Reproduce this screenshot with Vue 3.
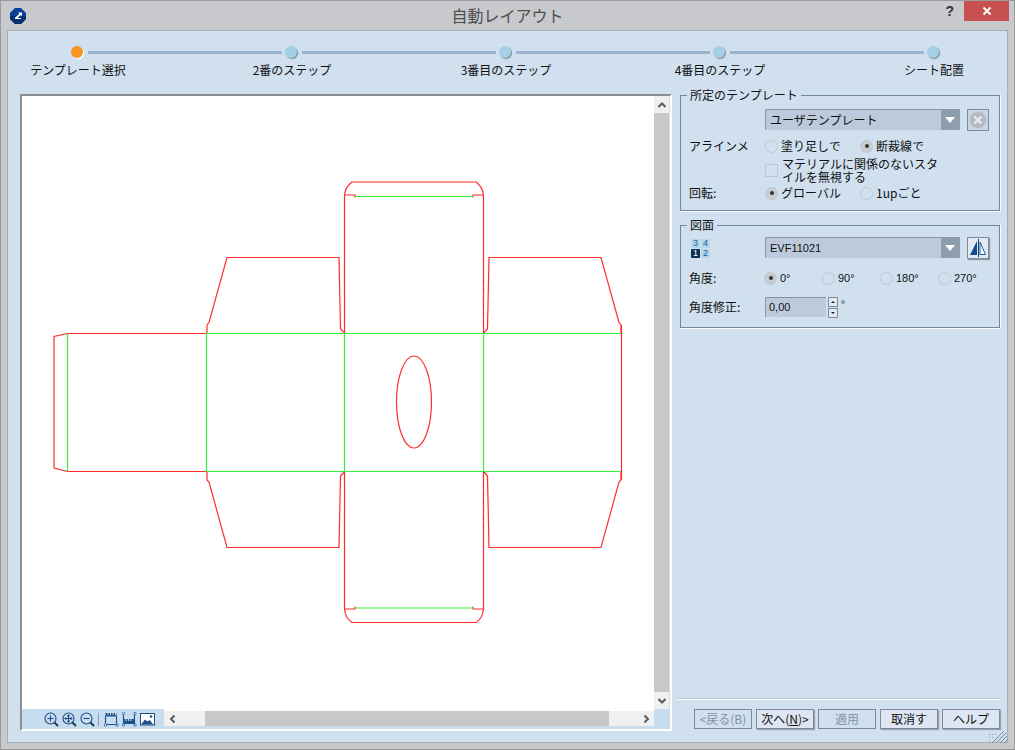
<template>
  <div class="window">
    <header class="titlebar">
      <svg class="app-icon" viewBox="0 0 16 16" width="16" height="16">
        <path d="M5 0h6l5 5v6l-5 5H5l-5-5V5z" fill="#0b3f93" />
        <path d="M0 8h16v3l-5 5H5l-5-5z" fill="#06306f" />
        <path d="M8 4.5h4v4l-1.3-1.5-3 3H11V11H5V9.8l4.3-4z" fill="#fff" />
      </svg>
      <h1 class="title">自動レイアウト</h1>
      <span class="help">?</span>
      <button class="close" aria-label="close">
        <svg viewBox="0 0 10 10" width="10" height="10"><path d="M1.5 1.5l7 7M8.5 1.5l-7 7" stroke="#fff" stroke-width="2" /></svg>
      </button>
    </header>

    <main class="panel">
      <section class="stepper">
        <div class="track">
          <template v-for="(s, i) in steps" :key="s">
            <span class="dot" :class="{ active: i === 0 }"></span>
            <span v-if="i < steps.length - 1" class="connector"></span>
          </template>
        </div>
        <div class="labels">
          <span v-for="s in steps" :key="s" class="step-label">{{ s }}</span>
        </div>
      </section>

      <section class="body">
        <div class="viewer">
          <div class="viewer-top">
            <div class="canvas">
              <svg class="dieline" viewBox="22 96 632 613" width="632" height="613">
                <g fill="none" stroke="#ff2b2b" stroke-width="1.2">
                  <path d="M67.5 333.5L54 336.5V468L67.5 471.5" />
                  <path d="M67.5 333.5H207" />
                  <path d="M67.5 471.5H207" />
                  <path d="M207 333V325L209 322.5L227 257.5H339L340.5 329L345 333" />
                  <path d="M621 333V325L619 322.5L601 257.5H489L487.5 329L483.500 333" />
                  <path d="M207 471.5V480L209 482L227 547.5H339L340.5 476L345 471.5" />
                  <path d="M621 471.5V480L619 482L601 547.5H489L487.5 476L483.5 471.5" />
                  <path d="M621.5 325V480" />
                  <path d="M344.5 333V195C345 189 348 185 352 182H476C480 185 483 189 483.5 195V333" />
                  <path d="M344.5 471.5V609C345 615 348 620 352 622.5H476C480 620 483 615 483.5 609V471.5" />
                  <path d="M345 195H355V197.5" />
                  <path d="M483 195H473V197.5" />
                  <path d="M345 609H355V606.5" />
                  <path d="M483 609H473V606.5" />
                  <ellipse cx="414" cy="402" rx="17.5" ry="46" />
                </g>
                <g fill="none" stroke="#35ee35" stroke-width="1.2">
                  <path d="M67.5 334V471" />
                  <path d="M207 333.5H621" />
                  <path d="M207 471.5H621" />
                  <path d="M206.5 333V472" />
                  <path d="M344.5 333V472" />
                  <path d="M483.5 333V472" />
                  <path d="M355 196.5H473" />
                  <path d="M355 608H473" />
                </g>
              </svg>
            </div>
            <div class="vscroll">
              <span class="sb-btn"><svg viewBox="0 0 10 10" width="10" height="10"><path d="M1.5 7L5 3.5 8.5 7" class="chev" /></svg></span>
              <span class="vthumb"></span>
              <span class="sb-btn"><svg viewBox="0 0 10 10" width="10" height="10"><path d="M1.5 3L5 6.5 8.5 3" class="chev" /></svg></span>
            </div>
          </div>
          <div class="viewer-bottom">
            <div class="tools">
              <svg class="tool" viewBox="0 0 15 15" width="15" height="15"><circle cx="6.5" cy="6.5" r="5.5" class="t" /><path d="M3.5 6.5h6M6.5 3.5v6" class="t" /><path d="M10.5 10.5l3.5 3.5" class="t thick" /></svg>
              <svg class="tool" viewBox="0 0 15 15" width="15" height="15"><circle cx="6.5" cy="6.5" r="5.5" class="t" /><path d="M3 6.5h7M6.5 3v7M5.3 4.2l1.2-1.2 1.2 1.2M5.3 8.8l1.2 1.2 1.2-1.2M4.2 5.3L3 6.5l1.2 1.2M8.8 5.3L10 6.5 8.8 7.7" class="t" /><path d="M10.5 10.5l3.5 3.5" class="t thick" /></svg>
              <svg class="tool" viewBox="0 0 15 15" width="15" height="15"><circle cx="6.5" cy="6.5" r="5.5" class="t" /><path d="M3.5 6.5h6" class="t" /><path d="M10.5 10.5l3.5 3.5" class="t thick" /></svg>
              <span class="tool-sep"></span>
              <svg class="tool" viewBox="0 0 15 15" width="15" height="15"><path d="M1.5 4.5V1h11v3.5h-11z" fill="#1d5289" /><path d="M4 1v2M6.5 1v2M9 1v2M11.5 1v2" stroke="#d0e0ef" stroke-width="1" /><path d="M1.5 4v8.5h11V4" class="t" /><circle cx="1.5" cy="13" r="1.2" fill="#fff" stroke="#2a6fc0" /><circle cx="13" cy="13" r="1.2" fill="#fff" stroke="#2a6fc0" /></svg>
              <svg class="tool" viewBox="0 0 15 15" width="15" height="15"><path d="M1.5 1.5v12M12.5 1.5v12" class="t" /><path d="M2 7h10v5H2z" fill="#1d5289" /><path d="M4 7v2M6.5 7v2M9 7v2" stroke="#d0e0ef" /><g fill="#fff" stroke="#2a6fc0"><circle cx="1.5" cy="1.5" r="1.2" /><circle cx="13" cy="1.5" r="1.2" /><circle cx="1.5" cy="13" r="1.2" /><circle cx="13" cy="13" r="1.2" /></g></svg>
              <svg class="tool" viewBox="0 0 15 15" width="15" height="15"><rect x="0.5" y="1.5" width="14" height="11.5" fill="#fff" stroke="#1d4f85" /><path d="M1 12.5l4-5 2.500 2 2-1.500 4 4.500z" fill="#1d5289" /><circle cx="11" cy="4.5" r="1.3" fill="#1d5289" /></svg>
            </div>
            <div class="hscroll">
              <span class="sb-btn"><svg viewBox="0 0 10 10" width="10" height="10"><path d="M6.5 1.5L3 5l3.5 3.5" class="chev" /></svg></span>
              <span class="htrack start"></span>
              <span class="hthumb"></span>
              <span class="htrack end"></span>
              <span class="sb-btn"><svg viewBox="0 0 10 10" width="10" height="10"><path d="M3.5 1.5L7 5 3.5 8.5" class="chev" /></svg></span>
            </div>
            <div class="corner"></div>
          </div>
        </div>

        <aside class="side">
          <div class="group first">
            <span class="legend">所定のテンプレート</span>
            <div class="row combo-row">
              <span class="key"></span>
              <div class="combo"><span>ユーザテンプレート</span><i class="arrow"></i></div>
              <button class="square disabled" aria-label="clear">
                <svg viewBox="0 0 18 18" width="18" height="18"><circle cx="9" cy="9" r="8.5" fill="#b5bcc5" /><path d="M5.5 5.5l7 7M12.5 5.5l-7 7" stroke="#e8ebef" stroke-width="2.2" /></svg>
              </button>
            </div>
            <div class="row opts">
              <span class="key">アラインメ</span>
              <label class="opt wide"><i class="radio"></i>塗り足しで</label>
              <label class="opt"><i class="radio on"></i>断裁線で</label>
            </div>
            <div class="row check">
              <span class="key"></span>
              <i class="checkbox"></i>
              <span class="check-text">マテリアルに関係のないスタイルを無視する</span>
            </div>
            <div class="row opts tight">
              <span class="key">回転:</span>
              <label class="opt wide"><i class="radio on"></i>グローバル</label>
              <label class="opt"><i class="radio"></i>1upごと</label>
            </div>
          </div>

          <div class="group second">
            <span class="legend">図面</span>
            <div class="row combo-row">
              <span class="key">
                <span class="pages">
                  <b>3</b><b>4</b><b class="cur">1</b><b>2</b>
                </span>
              </span>
              <div class="combo"><span class="latin">EVF11021</span><i class="arrow"></i></div>
              <button class="square" aria-label="mirror">
                <svg viewBox="0 0 20 20" width="20" height="20"><path d="M9 3v14H2z" fill="#124b8a" /><path d="M10.5 1v18" stroke="#123f73" stroke-width="1" /><path d="M12 4l5.500 12.500H12z" fill="#fff" stroke="#1c5a9a" /></svg>
              </button>
            </div>
            <div class="row angles">
              <span class="key">角度:</span>
              <label v-for="(a, i) in angles" :key="a" class="opt angle latin"><i class="radio" :class="{ on: i === 0 }"></i>{{ a }}</label>
            </div>
            <div class="row spin-row">
              <span class="key">角度修正:</span>
              <div class="spin-input latin">0,00</div>
              <div class="spin">
                <span><svg viewBox="0 0 6 4" width="6" height="4"><path d="M3 1l2 2H1z" fill="#222" /></svg></span>
                <span><svg viewBox="0 0 6 4" width="6" height="4"><path d="M3 3L1 1h4z" fill="#222" /></svg></span>
              </div>
              <span class="deg">°</span>
            </div>
          </div>

          <div class="foot">
            <hr class="rule" />
            <div class="buttons">
              <button class="btn off">&lt;戻る(B)</button>
              <button class="btn default">次へ(<u>N</u>)&gt;</button>
              <button class="btn off">適用</button>
              <button class="btn">取消す</button>
              <button class="btn">ヘルプ</button>
            </div>
          </div>
        </aside>
      </section>
    </main>

    <svg class="grip" viewBox="0 0 18 12" width="18" height="12">
      <path d="M15 0L3 12M17 2L7 12M18 5L11 12M18 9L15 12" stroke="#7d8794" stroke-width="1" />
      <g fill="#8a94a0"><rect x="0" y="3" width="1" height="1" /><rect x="3" y="3" width="1" height="1" /><rect x="6" y="3" width="1" height="1" /><rect x="0" y="6" width="1" height="1" /><rect x="3" y="6" width="1" height="1" /><rect x="0" y="9" width="1" height="1" /></g>
    </svg>
  </div>
</template>

<script setup>
const steps = ['テンプレート選択', '2番のステップ', '3番目のステップ', '4番目のステップ', 'シート配置']
const angles = ['0°', '90°', '180°', '270°']
</script>

<style>
html, body { margin: 0; background: #fff; }
</style>

<style scoped>
.window {
  position: relative;
  box-sizing: border-box;
  width: 1015px;
  height: 750px;
  display: flex;
  flex-direction: column;
  background: #c8c9cc;
  border: 1px solid #9b9b9b;
  padding: 0 6px 6px;
  font-family: "Noto Sans CJK JP", "Noto Sans", sans-serif;
  font-size: 12px;
  line-height: 16px;
  color: #111;
}
.titlebar {
  position: relative;
  flex: none;
  height: 29px;
  display: flex;
  align-items: flex-start;
}
.app-icon { margin: 7px 0 0 3px; flex: none; }
.title {
  position: absolute;
  left: 0;
  right: 0;
  top: 3px;
  margin: 0;
  text-align: center;
  font-size: 16px;
  line-height: 22px;
  font-weight: 400;
  color: #4d4d4d;
}
.help {
  margin-left: auto;
  margin-top: 2px;
  margin-right: 10px;
  font: 700 14px/16px "Liberation Sans", sans-serif;
  color: #333;
}
.close {
  width: 45px;
  height: 20px;
  margin: 0 -1px 0 0;
  padding: 0;
  border: 0;
  background: #c75050;
  display: flex;
  align-items: center;
  justify-content: center;
}
.panel {
  flex: 1;
  min-height: 0;
  background: #d0e0ef;
  border: 1px solid #a4adb8;
  padding: 0 7px 0 12px;
  display: flex;
  flex-direction: column;
}
.stepper { margin: 15px -7px 0 -12px; flex: none; }
.track {
  display: flex;
  align-items: center;
  padding-left: 63px;
  height: 12px;
}
.dot {
  flex: none;
  width: 12px;
  height: 12px;
  border-radius: 50%;
  background: #a4d0e6;
  box-shadow: 1px 1px 1px #7b8a99;
}
.dot.active {
  background: #f7931e;
  box-shadow: 1px 1px 1px #fff;
}
.connector {
  flex: none;
  width: 194px;
  height: 3px;
  margin: 1px 3px 0 5px;
  background: #9ab4cf;
}
.labels {
  display: flex;
  margin: 4px 0 0 0;
  gap: 74px;
}
.step-label {
  flex: none;
  width: 140px;
  text-align: center;
  white-space: nowrap;
}
.body {
  flex: 1;
  min-height: 0;
  display: flex;
  margin-top: 16px;
}
.viewer {
  box-sizing: border-box;
  flex: none;
  width: 652px;
  height: 637px;
  border-style: solid;
  border-width: 2px;
  border-color: #8a8f96 #fff #fff #8a8f96;
  display: flex;
  flex-direction: column;
}
.viewer-top {
  flex: none;
  height: 613px;
  display: flex;
}
.canvas {
  flex: none;
  width: 632px;
  height: 613px;
  background: #fff;
}
.dieline { display: block; }
.vscroll {
  flex: none;
  width: 15px;
  display: flex;
  flex-direction: column;
  background: #f0f0f0;
}
.sb-btn {
  flex: none;
  width: 15px;
  height: 17px;
  display: flex;
  align-items: center;
  justify-content: center;
  background: #f0f0f0;
}
.chev { fill: none; stroke: #5a5a5a; stroke-width: 2; }
.vthumb { flex: 1; background: #c8c8c8; }
.viewer-bottom {
  flex: none;
  height: 20px;
  display: flex;
  background: #c8dcef;
}
.tools {
  flex: none;
  width: 142px;
  box-sizing: border-box;
  display: flex;
  align-items: center;
  padding: 0 0 0 22px;
  gap: 3px;
  height: 20px;
}
.tool { flex: none; }
.t { fill: none; stroke: #1d4f85; stroke-width: 1.1; }
.t.thick { stroke-width: 2; stroke: #173a5e; }
.tool-sep {
  flex: none;
  width: 1px;
  height: 13px;
  margin: 0 2px 0 0;
  background: #8aa0b6;
}
.hscroll {
  flex: none;
  width: 490px;
  height: 15px;
  margin-top: 2px;
  display: flex;
  background: #f0f0f0;
  box-shadow: 0 -2px 0 #fff;
}
.hscroll .sb-btn { height: 15px; width: 17px; }
.htrack.start { width: 24px; flex: none; }
.htrack.end { flex: 1; }
.hthumb { flex: none; width: 404px; background: #c8c8c8; }
.corner { flex: 1; }
.side {
  flex: none;
  width: 320px;
  margin-left: 8px;
  height: 635px;
  display: flex;
  flex-direction: column;
}
.group {
  position: relative;
  box-sizing: border-box;
  border: 1px solid #6f86a0;
  padding: 13px 0 0 8px;
  box-shadow: 0 1px 0 #fff, 1px 0 0 #fff;
  flex: none;
}
.group.first { height: 116px; margin-top: 1px; }
.group.second { height: 103px; margin-top: 14px; padding-top: 11px; }
.legend {
  position: absolute;
  left: 6px;
  top: -9px;
  padding: 0 3px;
  background: #d0e0ef;
}
.row { display: flex; align-items: center; }
.key { flex: none; width: 76px; white-space: nowrap; }
.combo-row { height: 21px; }
.latin { font-family: "Liberation Sans", sans-serif; font-size: 11px; }
.combo {
  box-sizing: border-box;
  flex: none;
  width: 195px;
  height: 21px;
  display: flex;
  align-items: center;
  justify-content: space-between;
  padding-left: 4px;
  background: #bccadb;
  border-top: 1px solid #8796a8;
  border-left: 1px solid #8796a8;
}
.arrow {
  align-self: stretch;
  width: 19px;
  background: #8e9dad;
  position: relative;
}
.arrow::after {
  content: "";
  position: absolute;
  left: 4px;
  top: 7px;
  border-style: solid;
  border-width: 6px 5px 0;
  border-color: #fff transparent transparent;
}
.square {
  flex: none;
  box-sizing: border-box;
  width: 22px;
  height: 22px;
  margin-left: 7px;
  padding: 0;
  background: #e3e9f3;
  border: 1px solid #7f8a98;
  box-shadow: 1px 1px 1px #8c97a4;
  display: flex;
  align-items: center;
  justify-content: center;
}
.square.disabled { background: #ccd6e1; box-shadow: none; }
.opts { height: 16px; margin-top: 8px; }
.opts.tight { margin-top: 2px; }
.opt { display: flex; align-items: center; gap: 3px; white-space: nowrap; }
.opt.wide { width: 95px; flex: none; }
.radio {
  flex: none;
  box-sizing: border-box;
  width: 13px;
  height: 13px;
  border: 1px solid #bfc8d2;
  border-radius: 50%;
  position: relative;
}
.radio.on { background: #c9cdd3; }
.radio.on::after {
  content: "";
  position: absolute;
  left: 3.5px;
  top: 3.5px;
  width: 4px;
  height: 4px;
  border-radius: 50%;
  background: #333;
}
.check { align-items: flex-start; margin-top: 3px; }
.checkbox {
  flex: none;
  box-sizing: border-box;
  width: 13px;
  height: 13px;
  margin-top: 7px;
  border: 1px solid #bfc8d2;
}
.check-text { width: 160px; margin-left: 4px; line-height: 13px; }
.pages {
  display: grid;
  grid-template-columns: 9px 9px;
  grid-auto-rows: 9px;
  gap: 1px;
  margin: 2px 0 0 2px;
  width: 19px;
}
.pages b {
  background: #b4d6ea;
  color: #1c5a9a;
  font: 400 9px/9px "Liberation Sans", sans-serif;
  text-align: center;
  border-radius: 1px;
}
.pages b.cur { background: #0c2f55; color: #fff; }
.angles { height: 16px; margin-top: 12px; }
.angles .key { width: 75px; }
.angle { width: 58px; flex: none; }
.spin-row { margin-top: 11px; height: 20px; }
.spin-input {
  box-sizing: border-box;
  flex: none;
  width: 61px;
  height: 20px;
  padding-left: 3px;
  line-height: 19px;
  background: #bccadb;
  border-top: 1px solid #8796a8;
  border-left: 1px solid #8796a8;
}
.spin {
  flex: none;
  margin-left: 2px;
  width: 10px;
  display: flex;
  flex-direction: column;
  gap: 1px;
}
.spin span {
  box-sizing: border-box;
  height: 10px;
  background: #e3e9f3;
  border: 1px solid #7f8a98;
  display: flex;
  align-items: center;
  justify-content: center;
}
.deg { margin: -6px 0 0 3px; font-size: 11px; }
.foot { margin-top: auto; }
.rule {
  margin: 0 0 9px -3px;
  border: 0;
  height: 1px;
  background: #fff;
  box-shadow: 0 -1px 0 #bcc6d2;
}
.buttons {
  display: flex;
  justify-content: flex-end;
  gap: 4px;
}
.btn {
  box-sizing: border-box;
  width: 58px;
  height: 20px;
  padding: 0;
  font: inherit;
  line-height: 16px;
  color: #111;
  background: #dee6f3;
  border: 1px solid #7d8997;
  box-shadow: 1px 1px 1px #98a3b0;
  white-space: nowrap;
}
.btn.off { background: transparent; color: #8593a3; box-shadow: none; }
.grip { position: absolute; right: 7px; bottom: 6px; }
</style>
